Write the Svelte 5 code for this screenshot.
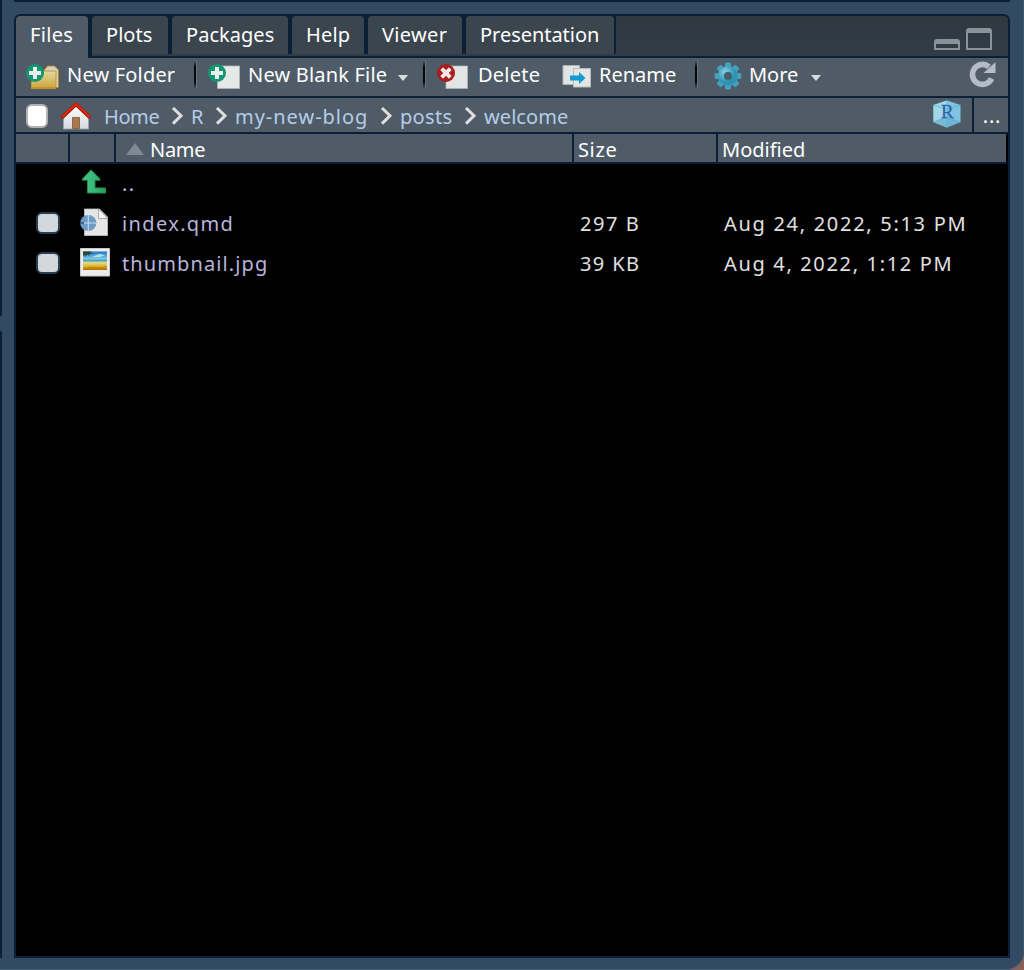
<script>
  const tabs = [
    { label: 'Files', w: 72, tw: 42, active: true },
    { label: 'Plots', w: 76, tw: 45 },
    { label: 'Packages', w: 116, tw: 87 },
    { label: 'Help', w: 72, tw: 43 },
    { label: 'Viewer', w: 94, tw: 64 },
    { label: 'Presentation', w: 148, tw: 118 }
  ];
  const crumbs = [
    { label: 'Home', w: 54 },
    { label: 'R', w: 11 },
    { label: 'my-new-blog', w: 132 },
    { label: 'posts', w: 51 },
    { label: 'welcome', w: 83 }
  ];
  const files = [
    { name: 'index.qmd', w: 111, kind: 'doc', size: '297 B', sw: 59, date: 'Aug 24, 2022, 5:13 PM', dw: 242 },
    { name: 'thumbnail.jpg', w: 145, kind: 'image', size: '39 KB', sw: 59, date: 'Aug 4, 2022, 1:12 PM', dw: 228 }
  ];
  const teeth = [0, 45, 90, 135, 180, 225, 270, 315];

  function track(node, width) {
    const range = document.createRange();
    range.selectNodeContents(node);
    const natural = range.getBoundingClientRect().width;
    const count = node.textContent.length;
    if (count > 1) node.style.letterSpacing = `${(width + 1.3 - natural) / count}px`;
  }
</script>

{#snippet label(text, width)}
  <span class="label" style:width="{width}px" use:track={width}>{text}</span>
{/snippet}

{#snippet badge(kind)}
  {#if kind === 'plus'}
    <circle cx="9" cy="9" r="9" fill="#159570" />
    <path d="M9 3v12M3 9h12" stroke="#e9efec" stroke-width="4" />
  {:else}
    <circle cx="9" cy="9" r="9" fill="#a81d1b" />
    <path d="M4.7 4.7l8.6 8.6M13.3 4.7l-8.6 8.6" stroke="#f0e8e8" stroke-width="4" />
  {/if}
{/snippet}

<div class="desktop">
  <div class="left"><i></i><i></i></div>
  <div class="main">
    <div class="above"></div>
    <section class="pane">
      <div class="tabbar">
        {#each tabs as t}
          <div class="slot" class:active={t.active}>
            <div class="tab" style:width="{t.w}px">{@render label(t.label, t.tw)}</div>
          </div>
        {/each}
        <div class="window">
          <svg width="58" height="22" viewBox="0 0 58 22">
            <path d="M0 22V14q0-3 3-3h20q3 0 3 3v8zM2 16v4h22v-4z" fill="#88949a" fill-rule="evenodd" />
            <path d="M32 22V3q0-3 3-3h20q3 0 3 3v19zM34 5v15h22V5z" fill="#88949a" fill-rule="evenodd" />
          </svg>
        </div>
      </div>

      <div class="toolbar">
        <svg class="newfolder" width="34" height="26" viewBox="0 0 34 26">
          <defs>
            <linearGradient id="gold" x2="0" y2="1"><stop stop-color="#e3d9a1" /><stop offset="1" stop-color="#cda43a" /></linearGradient>
          </defs>
          <path d="M17.5 7l4-5h7l4 4v17.500h-15z" fill="#d4d1c4" stroke="#b18720" />
          <path d="M5.500 9.500h9l4-2.500h11.500v17.500h-24.500z" fill="url(#gold)" stroke="#c29931" />
          <path d="M6 24h24" stroke="#b98619" />
          {@render badge('plus')}
        </svg>
        {@render label('New Folder', 107)}
        <i class="sep s1"></i>
        <svg class="newfile" width="33" height="26" viewBox="0 0 33 26">
          <path d="M9.500 2h22v22.500h-22z" fill="#e6e7e7" stroke="#b3b9bb" stroke-width=".7" />{@render badge('plus')}
        </svg>
        {@render label('New Blank File', 138)}
        <i class="caret c1"></i>
        <i class="sep s2"></i>
        <svg class="delete" width="33" height="26" viewBox="0 0 33 26">
          <path d="M9 2h21.500v22.500H9z" fill="#e3e4e4" stroke="#b3b9bb" stroke-width=".7" />{@render badge('x')}
        </svg>
        {@render label('Delete', 61)}
        <svg class="rename" width="30" height="25" viewBox="0 0 30 25">
          <path d="M1 1.500h16.500v19H1z" fill="#e2e5e6" stroke="#adb4b7" />
          <path d="M11.500 4.500h17v18.500h-17z" fill="#e5e5e5" stroke="#b8bcbe" />
          <path d="M8 11.500h9V8l6.500 6-6.500 6v-3.500H8z" fill="#119bd2" />
        </svg>
        {@render label('Rename', 76)}
        <i class="sep s3"></i>
        <svg class="gear" width="28" height="28" viewBox="-14 -14 28 28">
          <defs><radialGradient id="teal" cx=".35" cy=".3"><stop stop-color="#8bcfe0" /><stop offset="1" stop-color="#2f93b5" /></radialGradient></defs>
          {#each teeth as angle}
            <path d="M-3.600-8L-2.600-13.400h5.200L3.600-8z" fill="#45a2be" transform="rotate({angle})" />
          {/each}
          <circle r="9.600" fill="url(#teal)" />
          <circle r="3.800" fill="#4f5c67" stroke="#286f87" />
        </svg>
        {@render label('More', 48)}
        <i class="caret c2"></i>
        <svg class="refresh" width="28" height="27" viewBox="0 0 28 27">
          <path d="M20 5.800A10 10 0 1 0 22.600 17.500" fill="none" stroke="#b5bcc7" stroke-width="5.600" />
          <path d="M26.500 1v11H14.500z" fill="#b5bcc7" />
        </svg>
      </div>

      <div class="path">
        <i class="check all"></i>
        <svg class="home" width="32" height="28" viewBox="0 0 32 28">
          <defs><linearGradient id="wall" x2="0" y2="1"><stop stop-color="#fff" /><stop offset="1" stop-color="#d4d7df" /></linearGradient></defs>
          <path d="M3.500 16L16 3l12.500 13v11h-25z" fill="url(#wall)" stroke="#9aa1ab" stroke-width=".8" />
          <path d="M12.500 15.500h7V26.500h-7z" fill="#a8784e" stroke="#845529" stroke-width=".8" />
          <path d="M1.500 16L16 2.500 30.500 16" fill="none" stroke="#8e1b10" stroke-width="3.600" />
          <path d="M1.800 15.300L16 2.200l14.200 13.100" fill="none" stroke="#df2508" stroke-width="2.400" />
        </svg>
        {#each crumbs as c, n}
          {#if n}
            <svg class="chev" width="13" height="18" viewBox="0 0 13 18"><path d="M2 1l8 7.700L2 16.600" fill="none" stroke="#dedede" stroke-width="3" /></svg>
          {/if}
          {@render label(c.label, c.w)}
        {/each}
        <svg class="project" width="28" height="28" viewBox="0 0 28 28">
          <path d="M.5 5L14 .5 27.500 5v17L14 27.500.5 22z" fill="#7fc5e1" />
          <path d="M.5 5L14 .5V27.500L.5 22z" fill="#a1d8e9" />
          <path d="M.5 22L14 17l13.500 5L14 27.500z" fill="#65aecd" opacity=".7" />
          <path d="M14 .5v27M.5 5L14 9.500 27.500 5M.5 22L14 17l13.500 5" fill="none" stroke="#55b5c9" stroke-width=".8" />
          <text x="14.300" y="17.500" text-anchor="middle">R</text>
        </svg>
        <div class="dots">...</div>
      </div>

      <div class="head">
        <div></div><div></div>
        <div class="name"><i class="sort"></i>{@render label('Name', 54)}</div>
        <div class="size">{@render label('Size', 38)}</div>
        <div class="modified">{@render label('Modified', 82)}</div>
      </div>

      <div class="rows">
        <div class="row up">
          <i></i>
          <svg width="26" height="26" viewBox="0 0 26 26">
            <defs><linearGradient id="leaf"><stop stop-color="#4fc38a" /><stop offset=".5" stop-color="#39b675" /><stop offset="1" stop-color="#239d5e" /></linearGradient></defs>
            <path d="M10 .8l9 9.200v1.200h-5V19h10.500v5H6.500V11.200h-5V10z" fill="url(#leaf)" stroke="#1d8e53" />
          </svg>
          {@render label('..', 12)}
        </div>
        {#each files as f}
          <div class="row">
            <i class="check"></i>
            {#if f.kind === 'doc'}
              <svg width="30" height="29" viewBox="0 0 30 29">
                <path d="M4.500 1h15L27.500 9v18.500h-23z" fill="#e6e6e6" stroke="#c4c4c4" stroke-width=".8" />
                <path d="M18.500 1l9 9.500h-9z" fill="#f5f5f5" stroke="#a5a5a5" stroke-width=".9" />
                <circle cx="8.300" cy="15" r="8.100" fill="#6d9bc6" />
                <path d="M8.300 7v16M4 15h12.500" stroke="#c8dceb" stroke-width="1.100" />
                <path d="M0 15h4" stroke="#17344c" stroke-width="1.100" />
              </svg>
            {:else}
              <svg width="30" height="29" viewBox="0 0 30 29">
                <defs><linearGradient id="beach" x2="0" y2="1"><stop stop-color="#1b74c7" /><stop offset=".4" stop-color="#83cbe7" /><stop offset=".48" stop-color="#3aa5b8" /><stop offset=".6" stop-color="#dfd79d" /><stop offset=".78" stop-color="#eab922" /><stop offset="1" stop-color="#a96b08" /></linearGradient></defs>
                <path d="M.5.5h29v27.500H.5z" fill="#ececec" stroke="#c9c9c9" />
                <path d="M3 3.500h24v18.500H3z" fill="url(#beach)" />
                <path d="M3 3.500h9l-2 1 4 1.200-5 .3 1 2-3-1.500-2 2.500-.5-2.500L3 8z" fill="#274b39" />
                <path d="M12 9l7-3 6 1-5 2z" fill="#d6eef4" opacity=".8" />
                <path d="M5 20.500q6-2 10-1 6 1.500 11-1" fill="none" stroke="#b98412" stroke-width="1" />
              </svg>
            {/if}
            <div class="fname">{@render label(f.name, f.w)}</div>
            <div class="fsize">{@render label(f.size, f.sw)}</div>
            {@render label(f.date, f.dw)}
          </div>
        {/each}
      </div>
    </section>
  </div>
</div>

<style>
  :global(body) { margin: 0; background: #8a6158; overflow: hidden; }
  .desktop { display: flex; width: 1024px; height: 970px; box-sizing: border-box; background: #324b63; border-bottom-right-radius: 18px; border-bottom: 1px solid #48617a; border-right: 1px solid #3c566e; font-family: "Noto Sans", "Open Sans", sans-serif; font-size: 20px; line-height: 28px; color: #fff; overflow: hidden; }
  .left { width: 14px; flex: none; display: flex; flex-direction: column; gap: 15px; }
  .left i { width: 2px; height: 316px; background: #0b2036; }
  .left i + i { height: 627px; border-top-right-radius: 2px; }
  .main { width: 996px; flex: none; }
  .above { height: 2px; background: #0b2036; margin-bottom: 12px; }
  .pane { box-sizing: border-box; height: 944px; border: 2px solid #0b2036; border-radius: 6px 6px 0 0; background: #000; overflow: hidden; }
  .label { display: block; flex: none; white-space: pre; }
  svg { display: block; flex: none; }
  i { display: block; flex: none; }
  .tabbar { display: flex; height: 40px; background: linear-gradient(#303840, #313c45); border-bottom: 2px solid #0b2036; }
  .slot { flex: none; height: 38px; padding-right: 4px; background: #0b2036; }
  .slot:nth-child(6) { padding-right: 2px; }
  .tab { height: 38px; background: #3b454e; border-radius: 4px 4px 0 0; overflow: hidden; }
  .tab .label { margin: 5px 0 0 14px; }
  .slot.active, .active .tab { height: 42px; }
  .slot.active { background: linear-gradient(#0b2036 42px, #4f5c67 42px); background-size: 100% 42px; padding-right: 4px; }
  .active .tab { background: #4f5c67; }
  .window { margin: 12px 16px 0 auto; }
  .toolbar { display: flex; align-items: center; height: 38px; background: #4f5c67; border-bottom: 2px solid #0b2036; }
  .toolbar .label { margin-top: -5px; }
  .newfolder { margin: -1px 7px 0 10px; }
  .newfile { margin: -1px 7px 0 12px; }
  .delete { margin: -1px 8px 0 12px; }
  .rename { margin: -1px 7px 0 23px; }
  .gear { margin: -2px 7px 0 17px; }
  .refresh { margin: -6px 11px 0 auto; }
  .sep { width: 2px; height: 28px; margin-top: -5px; background: linear-gradient(#4f5c67, #050709 20%, #050709 75%, #4f5c67); box-shadow: 1px 0 #68747d; }
  .s1 { margin-left: 20px; }
  .s2 { margin-left: 15px; }
  .s3 { margin-left: 20px; }
  .caret { width: 0; height: 0; border: 5px solid transparent; border-top: 6px solid #dadddf; border-bottom: 0; margin-top: 2px; }
  .c1 { margin-left: 12px; }
  .c2 { margin-left: 14px; }
  .path { display: flex; align-items: center; height: 34px; background: #4f5c67; border-bottom: 2px solid #0b2036; color: #b6cce8; }
  .path .label { margin-top: 3px; }
  .check { box-sizing: border-box; width: 24px; height: 22px; border: 2px solid #2b3e4f; border-radius: 6px; background: #d2d8dd; }
  .all { width: 22px; height: 24px; margin: 2px 12px 0 10px; border-color: #b4b2b1; background: #fff; }
  .home { margin: 1px 12px 0 0; }
  .chev { margin: 2px 7px 0 13px; }
  .project { margin: -2px 11px 0 auto; }
  .project text { font: 19px "Liberation Serif", serif; fill: #3262a9; stroke: #3262a9; stroke-width: .3; }
  .dots { box-sizing: border-box; width: 36px; height: 34px; padding-left: 2px; border-left: 2px solid #0b2036; color: #fff; text-align: center; line-height: 35px; letter-spacing: .8px; }
  .head { display: grid; grid-template-columns: 54px 46px 458px 144px 288px; width: 990px; height: 28px; background: #4f5c67; border-bottom: 2px solid #0b2036; }
  .head > div { display: flex; align-items: center; border-right: 2px solid #0b2036; }
  .head > div:last-child { border: 0; }
  .head .label { margin-top: 2px; }
  .sort { border: 9px solid transparent; border-bottom: 12px solid #7e8998; border-top: 0; margin: -1px 6px 0 10px; }
  .size, .modified { padding-left: 4px; }
  .rows { color: #e0e0e0; }
  .row { display: flex; align-items: center; height: 40px; }
  .row > .check { margin: -2px 20px 0 20px; }
  .row > svg { margin: -4px 12px 0 0; }
  .fname { width: 458px; color: #b8b4dc; }
  .fsize { width: 144px; }
  .up { color: #b8b4dc; }
  .up > i { width: 64px; }
  .up > svg { margin: -4px 15px 0 1px; }
</style>
